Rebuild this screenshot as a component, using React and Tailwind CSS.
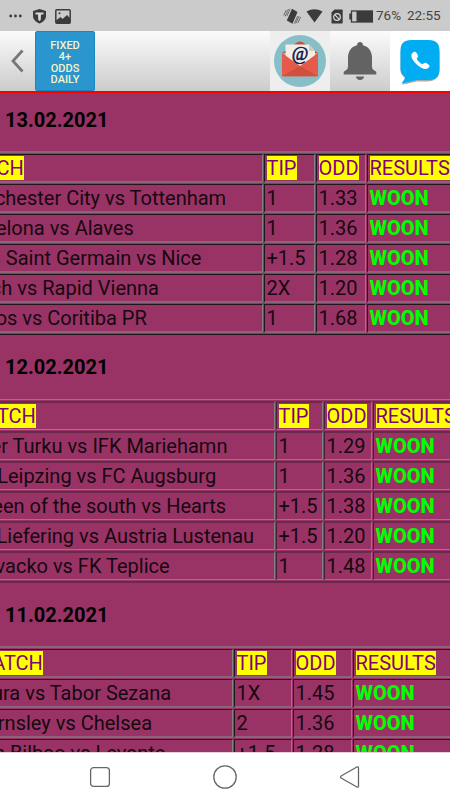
import React from "react";
import clsx from "clsx";

const DAYS = [
  {
    date: "13.02.2021",
    place: "ml-[-47px] grid-cols-[310px_51px_50px_112px]",
    heading: "h-[58px] pt-[14px]",
    soft: false,
    rows: [
      ["Manchester City vs Tottenham", "1", "1.33"],
      ["Barcelona vs Alaves", "1", "1.36"],
      ["Paris Saint Germain vs Nice", "+1.5", "1.28"],
      ["Altach vs Rapid Vienna", "2X", "1.20"],
      ["Santos vs Coritiba PR", "1", "1.68"],
    ],
  },
  {
    date: "12.02.2021",
    place: "ml-[-35px] grid-cols-[310px_47px_48px_112px]",
    heading: "h-[64px] pt-[19px]",
    soft: true,
    rows: [
      ["Inter Turku vs IFK Mariehamn", "1", "1.29"],
      ["RB Leipzing vs FC Augsburg", "1", "1.36"],
      ["Queen of the south vs Hearts", "+1.5", "1.38"],
      ["FC Liefering vs Austria Lustenau", "+1.5", "1.20"],
      ["Slovacko vs FK Teplice", "1", "1.48"],
    ],
  },
  {
    date: "11.02.2021",
    place: "ml-[-28px] grid-cols-[261px_58px_59px_112px]",
    heading: "h-[63px] pt-[19px]",
    soft: false,
    rows: [
      ["Mura vs Tabor Sezana", "1X", "1.45"],
      ["Barnsley vs Chelsea", "2", "1.36"],
      ["Ath Bilbao vs Levante", "+1.5", "1.28"],
    ],
  },
];

export default function App() {
  return (
    <div className="flex h-[800px] w-[450px] flex-col overflow-hidden bg-white font-[Roboto,sans-serif]">
      <StatusBar />
      <Toolbar />
      <main className="min-h-0 flex-1 overflow-hidden bg-[#993366] text-[20px] leading-[24px] text-[#160810]">
        {DAYS.map((day) => (
          <Day key={day.date} day={day} />
        ))}
      </main>
      <NavBar />
    </div>
  );
}

function Day({ day }) {
  return (
    <section>
      <h2
        className={clsx(
          "pl-[5px] text-[20px] font-bold leading-[26px] text-black",
          day.heading
        )}
      >
        {day.date}
      </h2>
      <div
        className={clsx(
          "grid w-max auto-rows-[29px] gap-px",
          day.place,
          day.soft
            ? "border-t border-b-2 border-t-[#858084] border-b-[#6a2b4a] pt-px pb-px"
            : "border-t-2 border-b border-t-[#8a6478] border-b-[#24151d] pt-px pb-px"
        )}
      >
        {["MATCH", "TIP", "ODD", "RESULTS"].map((label) => (
          <Cell key={label} soft={day.soft}>
            <span className="inline-block bg-[#ffff00] text-[#800080]">{label}</span>
          </Cell>
        ))}
        {day.rows.map(([match, tip, odd]) => (
          <React.Fragment key={match}>
            <Cell soft={day.soft}>{match}</Cell>
            <Cell soft={day.soft}>{tip}</Cell>
            <Cell soft={day.soft}>{odd}</Cell>
            <Cell soft={day.soft}>
              <span className="font-extrabold text-[#00ff00]">WOON</span>
            </Cell>
          </React.Fragment>
        ))}
      </div>
    </section>
  );
}

function Cell({ soft, children }) {
  return (
    <div
      className={clsx(
        "whitespace-nowrap border-r border-l pl-[1.5px]",
        soft
          ? "border-t-2 border-b border-t-[#6a2b4a] border-r-[#858084] border-b-[#858084] border-l-[#4a2036] pt-[0.5px]"
          : "border-t border-b-2 border-t-[#24151d] border-r-[#858084] border-b-[#8a6478] border-l-[#24151d] pt-px"
      )}
    >
      {children}
    </div>
  );
}

function StatusBar() {
  return (
    <div className="flex h-[31px] shrink-0 items-center bg-[#cbcbcb] pt-px pr-[10px] pl-[9px] text-[#444]">
      <svg width="13" height="4" viewBox="0 0 13 4" fill="#3b3b3b">
        <circle cx="1.7" cy="2" r="1.4" />
        <circle cx="6.5" cy="2" r="1.4" />
        <circle cx="11.3" cy="2" r="1.4" />
      </svg>
      <svg className="ml-[10px]" width="15" height="16" viewBox="0 0 15 16">
        <path d="M7.5 1 14 3v5c0 3.500-3 6-6.500 7.500C4 14 1 11.500 1 8V3Z" fill="#3b3b3b" />
        <path d="M3.500 4.500h8v2H9l-.3 5.500-1.200 1-1.200-1L6 6.500H3.500Z" fill="#d8d8d8" />
      </svg>
      <svg className="ml-[8px]" width="16" height="15" viewBox="0 0 16 15">
        <rect x=".8" y=".8" width="14.400" height="13.400" rx="1" fill="none" stroke="#3b3b3b" strokeWidth="1.500" />
        <path d="M1 11.500 5.500 8l2 2L12 6l3 3v5H1Z" fill="#3b3b3b" />
        <circle cx="4.500" cy="4.300" r="1" fill="#3b3b3b" />
      </svg>

      <svg className="ml-auto" width="18" height="17" viewBox="0 0 18 17">
        <path d="M9 .8 14.500 4 9.500 15.800 3.800 12.500Z" fill="#3b3b3b" />
        <path
          d="M5.500 1 2 8.500M3.300 2 .6 7.500M7.200.8 3.800 8M16.200 8l-3.500 7.500M17.600 9l-2.800 6M14.600 8.200l-3.200 7.300"
          fill="none"
          stroke="#555"
          strokeWidth=".8"
        />
      </svg>
      <svg className="ml-[5px]" width="17" height="14" viewBox="0 0 17 14" fill="#3b3b3b">
        <path d="M.5 2.500Q8.500-2 16.500 2.500L8.500 13.500Z" />
      </svg>
      <svg className="ml-[8px]" width="12" height="15" viewBox="0 0 12 15">
        <path d="M3.500.5H11q.7 0 .7.700V13.800q0 .7-.7.700H1.200q-.7 0-.7-.7V3.500Z" fill="#3b3b3b" />
        <circle cx="6" cy="8" r="3.300" fill="none" stroke="#ddd" strokeWidth="1.200" />
        <path d="m3.700 5.700 4.600 4.600" stroke="#ddd" strokeWidth="1.200" />
      </svg>
      <svg className="ml-[6px]" width="24" height="13" viewBox="0 0 24 13">
        <path d="M2 3.500H.3v6H2" fill="#3b3b3b" />
        <rect x="2.500" y="1" width="21" height="11" fill="none" stroke="#3b3b3b" strokeWidth="1.300" />
        <rect x="7.500" y="1" width="16" height="11" fill="#3b3b3b" />
      </svg>
      <span className="ml-[3px] w-[25px] text-[13.500px] leading-none whitespace-nowrap">76%</span>
      <span className="ml-[6px] w-[33px] text-[13.500px] leading-none whitespace-nowrap">22:55</span>
    </div>
  );
}

function Toolbar() {
  return (
    <header className="flex h-[62px] shrink-0 border-b-2 border-[#ff0000] bg-linear-to-b from-[#fbfbfb] to-[#cccccc]">
      <button type="button" className="flex w-[35px] items-center pl-[10px]">
        <svg width="15" height="24" viewBox="0 0 15 24" fill="none" stroke="#777" strokeWidth="2.800">
          <path d="M12.500 1.500 3 12l9.500 10.500" />
        </svg>
      </button>
      <div className="w-[60px] rounded-[2px] border border-[#1688c4] bg-[#2b95cd] pt-[8px] text-center text-[11px] leading-[11.300px] font-medium text-[#f5f3c8]">
        FIXED
        <br />
        4+
        <br />
        ODDS
        <br />
        DAILY
      </div>
      <div className="ml-auto flex w-[60px] items-center justify-center bg-[#eeeeee]">
        <MailIcon />
      </div>
      <div className="flex w-[60px] items-center justify-center">
        <svg width="34" height="40" viewBox="0 0 34 40" fill="#636363">
          <path d="M17 1c2 0 3 1.500 3 3.200 5.500 1.300 9 6 9 12.300v9c0 2.500 1.300 3.500 4.300 5.300v2.700H.7v-2.700C3.700 29 5 28 5 25.500v-9c0-6.300 3.500-11 9-12.300C14 2.500 15 1 17 1Z" />
          <path d="M13 35.500h8c0 2-1.800 3.500-4 3.500s-4-1.500-4-3.500Z" />
        </svg>
      </div>
      <div className="flex w-[60px] items-center justify-center bg-white pt-[2px]">
        <svg width="42" height="46" viewBox="0 0 42 46">
          <path
            d="M14 2.500h14c8 0 12.500 4.500 12.500 12.500v15c0 8-4.500 12.500-12.500 12.500H19c-4 0-8.500 2.500-16.500 3 2-2 3.500-4 3.500-6.300C3 36.500 1.500 34 1.500 30V15C1.500 7 6 2.500 14 2.500Z"
            fill="#aaa"
          />
          <path
            d="M12 1h18c7 0 10.500 3.500 10.500 10.500v19C40.500 37.500 37 41 30 41H19c-4 0-8.500 2.500-16.500 3 2-2 3.500-4 3.500-6.300C3 36 1.500 33.500 1.500 30V11.500C1.500 4.500 5 1 12 1Z"
            fill="#00adf2"
          />
          <path
            d="M14 13.500c-2.500 1.500-2 5 .8 8.700 3 3.800 7 6.800 10.700 7.800 2.500.6 5-1.300 5-2.900 0-1.100-3.200-3.300-4.500-3.300-1.400 0-1.600 1.600-2.900 1.200-1.700-.6-4.800-3.500-5.300-5-.4-1.300 1.400-1.500 1.200-2.800-.2-1.500-1.500-3.800-2.500-4.200-.8-.4-1.700 0-2.500.5Z"
            fill="#fff"
          />
        </svg>
      </div>
    </header>
  );
}

function MailIcon() {
  return (
    <svg width="54" height="54" viewBox="0 0 54 54">
      <circle cx="27" cy="27" r="26" fill="#86bfc8" />
      <path d="M9 19 24 8.500q3-2 6 0L45 19Z" fill="#c94f40" />
      <path d="M12.500 10.500H36l6 6.500V37h-29.500Z" fill="#f3eee5" />
      <path d="M36 10.500V17h6Z" fill="#cfcac2" />
      <path d="M9 19 27 32 45 19v22.500q0 1-1 1H10q-1 0-1-1Z" fill="#e65a49" />
      <path d="M9.500 42 27 32 44.500 42Z" fill="#cf5041" />
      <text
        x="27"
        y="26"
        textAnchor="middle"
        fontFamily="Liberation Serif, serif"
        fontSize="18"
        fill="#0c1a4a"
        stroke="#0c1a4a"
        strokeWidth=".6"
      >
        @
      </text>
    </svg>
  );
}

function NavBar() {
  return (
    <nav className="flex h-[48px] shrink-0 items-center justify-center gap-[102px] border-t border-[#e8cfdb] bg-white">
      <svg width="22" height="22" viewBox="0 0 22 22" fill="none" stroke="#666" strokeWidth="1.300">
        <rect x="1.600" y="1.600" width="18.800" height="18.800" rx="3" />
      </svg>
      <svg width="24" height="24" viewBox="0 0 24 24" fill="none" stroke="#666" strokeWidth="1.300">
        <circle cx="12" cy="12" r="11.200" />
      </svg>
      <svg width="22" height="22" viewBox="0 0 22 22" fill="none" stroke="#666" strokeWidth="1.300">
        <path d="M2.500 9.800 17.500 1.200q2-1 2 1v17.600q0 2-2 1L2.500 12.200q-1.800-1.200 0-2.400Z" />
      </svg>
    </nav>
  );
}
